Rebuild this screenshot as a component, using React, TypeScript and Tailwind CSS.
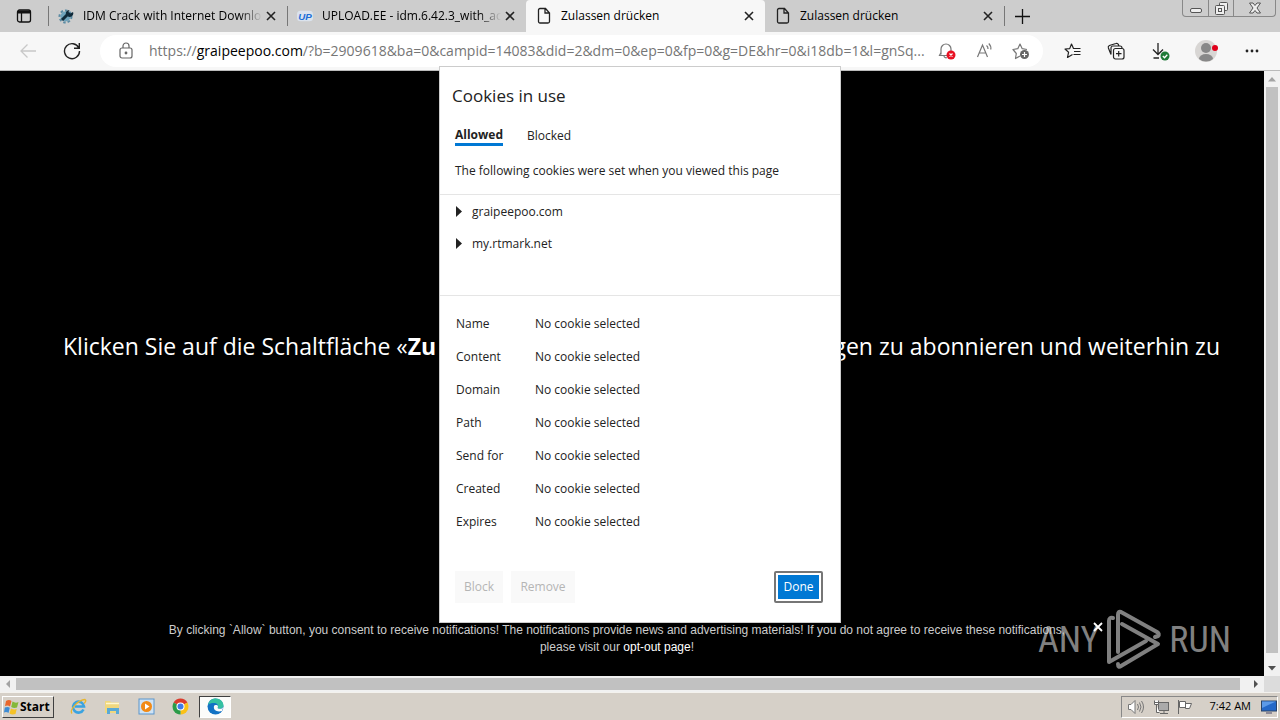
import type { ReactNode } from 'react'

const cookieFields = ['Name', 'Content', 'Domain', 'Path', 'Send for', 'Created', 'Expires']
const cookieHosts = ['graipeepoo.com', 'my.rtmark.net']

function CloseIcon() {
  return (
    <svg width="10" height="10" viewBox="0 0 10 10" stroke="#222" strokeWidth="1.6" fill="none">
      <path d="M1 1l8 8M9 1L1 9" />
    </svg>
  )
}

function PageIcon() {
  return (
    <svg width="16" height="18" viewBox="0 0 16 18" stroke="#222" strokeWidth="1.3" fill="none">
      <path d="M2.5 3A1.5 1.5 0 0 1 4 1.5h5.5l4 4.5v8.5a1.5 1.5 0 0 1-1.5 1.5H4a1.5 1.5 0 0 1-1.5-1.5z M9 1.5V6h4.5" />
    </svg>
  )
}

function GearIcon() {
  return (
    <svg width="16" height="16" viewBox="0 0 16 16">
      <circle cx="7.5" cy="8.5" r="5" fill="#6fa3bb" />
      <circle cx="7.5" cy="8.5" r="6" fill="none" stroke="#5b8ba3" strokeWidth="2" strokeDasharray="2.5 2" />
      <path d="M4 12l5-5" stroke="#102a3a" strokeWidth="3" />
      <path d="M8.5 7.5a3.5 3.5 0 0 1 3-5.5l-1 2 2 1.5 2.5-1.5a3.5 3.5 0 0 1-5.5 4z" fill="#102a3a" />
    </svg>
  )
}

function UploadIcon() {
  return (
    <svg width="18" height="16" viewBox="0 0 18 16">
      <rect x="0" y="2" width="18" height="12" rx="4" fill="#dbe3ed" />
      <text x="9" y="12" textAnchor="middle" fontFamily="Liberation Sans" fontStyle="italic" fontWeight="bold" fontSize="11" fill="#1d6fd8">UP</text>
    </svg>
  )
}

function Tab({ icon, title, faded }: { icon: ReactNode; title: string; faded?: boolean }) {
  return (
    <>
      <span className="flex w-4 shrink-0 justify-center">{icon}</span>
      <span className={`ml-[9px] min-w-0 flex-1 overflow-hidden text-left whitespace-nowrap ${faded ? '[mask-image:linear-gradient(to_right,black_88%,transparent)]' : ''}`}>
        {title}
      </span>
      <button aria-label="Close tab" className="mr-[11px] ml-1 shrink-0">
        <CloseIcon />
      </button>
    </>
  )
}

function TabStrip() {
  return (
    <header className="flex h-8 shrink-0 bg-[#cdcdcd] text-xs text-black">
      <button aria-label="Tab actions" className="flex w-12 shrink-0 items-center justify-center">
        <svg width="16" height="16" viewBox="0 0 16 16" fill="none" stroke="#111" strokeWidth="1.3">
          <rect x="1.5" y="2" width="13" height="12" rx="2" />
          <path d="M5.5 5v9" />
          <path d="M2 4h12" strokeWidth="3" />
        </svg>
      </button>
      <div className="my-1.5 flex max-w-[239px] flex-1 items-center border-l border-[#777] pl-[9px]">
        <Tab icon={<GearIcon />} title="IDM Crack with Internet Downloa" faded />
      </div>
      <div className="my-1.5 flex max-w-[239px] flex-1 items-center border-l border-[#777] pl-[9px]">
        <Tab icon={<UploadIcon />} title="UPLOAD.EE - idm.6.42.3_with_act" faded />
      </div>
      <div className="flex max-w-[239px] flex-1 items-center rounded-t bg-[#f7f7f7] pl-[10px]">
        <Tab icon={<PageIcon />} title="Zulassen drücken" />
      </div>
      <div className="flex max-w-[239px] flex-1 items-center pl-[10px]">
        <Tab icon={<PageIcon />} title="Zulassen drücken" />
      </div>
      <button aria-label="New tab" className="my-1.5 flex w-9 items-center justify-center border-l border-[#777]">
        <svg width="15" height="15" viewBox="0 0 15 15" stroke="#111" strokeWidth="1.3">
          <path d="M7.5 0v15M0 7.5h15" />
        </svg>
      </button>
      <div className="mr-1 ml-auto flex h-[17px] shrink-0 divide-x divide-[#888] rounded-b-[4px] border border-t-0 border-[#888]">
        <button aria-label="Minimize" className="flex w-[26px] items-center justify-center">
          <svg width="12" height="12" viewBox="0 0 12 12" fill="#eee" stroke="#555">
            <rect x=".5" y="6.5" width="11" height="4" rx="1.5" />
          </svg>
        </button>
        <button aria-label="Restore" className="flex w-[25px] items-center justify-center">
          <svg width="13" height="13" viewBox="0 0 13 13" fill="#eee" stroke="#555">
            <rect x="4.5" y=".5" width="8" height="8" rx="1" />
            <rect x=".5" y="3.5" width="9" height="9" rx="1" />
            <rect x="3.5" y="6.5" width="3" height="3" />
          </svg>
        </button>
        <button aria-label="Close window" className="flex w-[41px] items-center justify-center">
          <svg width="12" height="12" viewBox="0 0 12 12" fill="#eee" stroke="#555">
            <path d="M.5 1H4l2 2.5L8 1h3.500L8 6l3.500 5H8L6 8.500 4 11H.5L4 6z" />
          </svg>
        </button>
      </div>
    </header>
  )
}

function Toolbar() {
  return (
    <div className="flex h-[39px] shrink-0 items-center border-b border-[#bbb] bg-[#f7f7f7] pl-[19px]">
      <button aria-label="Back" disabled>
        <svg width="18" height="16" viewBox="0 0 18 16" fill="none" stroke="#c8c8c8" strokeWidth="1.3">
          <path d="M17 8H2M8.5 1.5L2 8l6.5 6.5" />
        </svg>
      </button>
      <button aria-label="Refresh" className="ml-[26px]">
        <svg width="18" height="18" viewBox="0 0 18 18" fill="none" stroke="#222" strokeWidth="1.4">
          <path d="M15.8 6A7.5 7.5 0 1 0 16.5 9M16.3 1v5.300H11" />
        </svg>
      </button>
      <div className="ml-[19px] flex h-8 min-w-0 flex-1 items-center rounded-full bg-white pr-[13px] pl-[18px]">
        <svg className="shrink-0" width="16" height="18" viewBox="0 0 16 18" fill="none" stroke="#666" strokeWidth="1.2">
          <rect x="2" y="6" width="12" height="10" rx="2" />
          <path d="M5 6V4a3 3 0 0 1 6 0v2" />
          <circle cx="8" cy="11" r=".8" fill="#666" />
        </svg>
        <p className="ml-[15px] min-w-0 flex-1 overflow-hidden text-sm whitespace-nowrap text-[#767676]">
          https://<span className="text-black">graipeepoo.com</span>/?b=2909618&amp;ba=0&amp;campid=14083&amp;did=2&amp;dm=0&amp;ep=0&amp;fp=0&amp;g=DE&amp;hr=0&amp;i18db=1&amp;l=gnSq...
        </p>
        <div className="ml-2 flex shrink-0 items-center gap-[19px]">
          <button aria-label="Notifications blocked">
            <svg width="18" height="18" viewBox="0 0 18 18" fill="none" stroke="#777" strokeWidth="1.2">
              <path d="M3 12.5V7a5 5 0 0 1 10 0v3M3 10.5l-1.5 3H9M6 14a2 2 0 0 0 3 1.5" />
              <circle cx="13" cy="13" r="4.5" fill="#e81123" stroke="none" />
              <path d="M11.5 11.5l3 3M14.5 11.5l-3 3" stroke="#fff" />
            </svg>
          </button>
          <button aria-label="Read aloud">
            <svg width="18" height="18" viewBox="0 0 18 18" fill="none" stroke="#777" strokeWidth="1.2">
              <path d="M2.5 15L7.5 3l5 12M4.200 11h6.600M11.500 3.500a4 4 0 0 1 1.500 3.500M13.800 1.500a7 7 0 0 1 2 6" />
            </svg>
          </button>
          <button aria-label="Add to favorites">
            <svg width="18" height="18" viewBox="0 0 18 18" fill="none" stroke="#777" strokeWidth="1.2" strokeLinejoin="round">
              <path d="M8 14l-4.500 2.500.8-5L1 7.500l4.800-.8L8 2l2.200 4.700 4.800.8" />
              <circle cx="12.5" cy="12.5" r="4.5" fill="#666" stroke="none" />
              <path d="M12.5 10v5M10 12.500h5" stroke="#fff" />
            </svg>
          </button>
        </div>
      </div>
      <div className="ml-[21px] flex shrink-0 items-center gap-[25px] pr-5">
        <button aria-label="Favorites">
          <svg width="18" height="18" viewBox="0 0 18 18" fill="none" stroke="#222" strokeWidth="1.2" strokeLinejoin="round">
            <path d="M16.5 6.5h-7L7.5 2 5.700 6.600 1 7l3.600 3.200-1.100 5.300 5-3M10 9.500h6.500M9.500 12.500h7" />
          </svg>
        </button>
        <button aria-label="Collections">
          <svg width="18" height="18" viewBox="0 0 18 18" fill="none" stroke="#222" strokeWidth="1.2">
            <rect x="6.5" y="6.5" width="10.5" height="10.5" rx="2" />
            <path d="M11.700 9v5.500M9 11.700h5.500M4 12.500L1.400 6a2 2 0 0 1 1-2.500l6.500-2a2 2 0 0 1 2.500 1l.4 1.200M4 12.500V6a2 2 0 0 1 2-2h7a2 2 0 0 1 2 2" />
          </svg>
        </button>
        <button aria-label="Downloads">
          <svg width="20" height="20" viewBox="0 0 20 20" fill="none" stroke="#222" strokeWidth="1.3">
            <path d="M8 2v11M3 8.500l5 5 5-5M3.500 17H9" />
            <circle cx="15" cy="15" r="4.5" fill="#1f7a38" stroke="none" />
            <path d="M12.800 15l1.700 1.700 2.800-3" stroke="#fff" />
          </svg>
        </button>
        <button aria-label="Profile">
          <svg width="24" height="24" viewBox="0 0 24 24">
            <circle cx="11" cy="12" r="11" fill="#d8d6d4" />
            <circle cx="11" cy="9" r="5" fill="#888" />
            <path d="M4 20a7 5 0 0 1 14 0 11 11 0 0 1-14 0z" fill="#888" />
            <circle cx="20" cy="9" r="3" fill="#e0001b" />
          </svg>
        </button>
        <button aria-label="Settings and more">
          <svg width="16" height="4" viewBox="0 0 16 4" fill="#222">
            <circle cx="3" cy="2" r="1.4" />
            <circle cx="8" cy="2" r="1.4" />
            <circle cx="13" cy="2" r="1.4" />
          </svg>
        </button>
      </div>
    </div>
  )
}

function CookieDialog() {
  return (
    <section
      role="dialog"
      aria-label="Cookies in use"
      className="absolute -top-[5px] left-1/2 z-10 w-[402px] -translate-x-1/2 border border-[#ccc] bg-white text-xs text-[#222]"
    >
      <h1 className="pt-[17px] pl-3 text-[17px] leading-6">Cookies in use</h1>
      <div className="mt-[19px] flex items-start gap-6 pl-[15px] leading-4">
        <button className="border-b-[3px] border-[#0078d4] font-bold">Allowed</button>
        <button className="pt-px">Blocked</button>
      </div>
      <p className="mt-[17px] border-b border-[#e5e5e5] pb-[15px] pl-[15px] leading-4">
        The following cookies were set when you viewed this page
      </p>
      <ul className="h-[101px] border-b border-[#e5e5e5] pt-px leading-8">
        {cookieHosts.map(host => (
          <li key={host} className="flex items-center gap-[10px] pl-4">
            <svg width="6" height="12" viewBox="0 0 6 12" fill="#222">
              <path d="M0 0l6 5.500-6 5.500z" />
            </svg>
            {host}
          </li>
        ))}
      </ul>
      <table className="mt-[11px] ml-4 text-left">
        <tbody>
          {cookieFields.map(field => (
            <tr key={field} className="h-[33px]">
              <th scope="row" className="w-[79px] p-0 font-normal">{field}</th>
              <td className="p-0">No cookie selected</td>
            </tr>
          ))}
        </tbody>
      </table>
      <div className="mt-[33px] flex gap-2 pr-[17px] pb-[19px] pl-[15px]">
        <button disabled className="h-8 w-12 bg-[#f9f9f9] text-[#b5b5b5]">Block</button>
        <button disabled className="h-8 w-16 bg-[#f9f9f9] text-[#b5b5b5]">Remove</button>
        <button className="ml-auto h-8 w-[49px] rounded-xs border-2 border-[#767676] bg-[#0078d4] text-white ring-2 ring-white ring-inset">
          Done
        </button>
      </div>
    </section>
  )
}

function Watermark() {
  return (
    <div className="absolute right-[33px] bottom-1 flex items-center gap-[7px] font-['Liberation_Sans_Narrow','Roboto_Condensed',sans-serif] text-[36px] leading-none text-[#808080]">
      <span>ANY</span>
      <svg width="56" height="64" viewBox="0 0 56 64" fill="none" stroke="#808080" strokeWidth="4" strokeLinecap="round" strokeLinejoin="round">
        <path d="M12 44V7q0-4 3-3l36 20q3 2 1 4l-3 1" />
        <path d="M16 16l36 20L15 58q-3 2-3-2" />
        <path d="M7 10q-4-1-4 3v41L40 33" />
      </svg>
      <span>RUN</span>
    </div>
  )
}

function Arrow({ d, color = '#505050' }: { d: string; color?: string }) {
  return (
    <svg width="16" height="16" viewBox="0 0 16 16" fill={color} className="shrink-0">
      <path d={d} />
    </svg>
  )
}

function Taskbar() {
  return (
    <footer className="flex h-7 shrink-0 items-center border-t border-[#f4f2ee] bg-[#d6d0c8] px-0.5 text-black">
      <button className="flex h-[22px] w-[52px] items-center gap-px border border-t-white border-r-[#404040] border-b-[#404040] border-l-white px-px font-['Open_Sans','DejaVu_Sans',sans-serif] text-xs font-bold">
        <svg width="15" height="16" viewBox="0 0 15 16" className="shrink-0">
          <path d="M2 2q3-2 5.500 0L6 7.500Q4 6 1 7z" fill="#e8662c" />
          <path d="M8.500 2.500q3 2 6 .5L13 8.500q-3 1.200-5.800-.5z" fill="#84b83a" />
          <path d="M.8 8.500q3-1.200 5 .3L4.500 14Q2.500 12.500 0 13.500z" fill="#3d8bd4" />
          <path d="M7 9.500q3 1.500 5.700.5L11.500 15Q8 16 5.500 14.500z" fill="#f5c227" />
        </svg>
        Start
      </button>
      <div className="ml-4 flex items-center gap-[17px]">
        <button aria-label="Internet Explorer">
          <svg width="17" height="17" viewBox="0 0 17 17" fill="none">
            <path d="M13.500 11.500A5.500 5.500 0 1 1 14 8.500H5" stroke="#3aa3e0" strokeWidth="2.6" />
            <path d="M2 15.500C-1 12 8 2 15 1.500q2 1-1 4" stroke="#e8b62c" strokeWidth="1.3" />
          </svg>
        </button>
        <button aria-label="Explorer">
          <svg width="17" height="17" viewBox="0 0 17 17">
            <path d="M1 3h5l1 1.500h8V15H1z" fill="#f0d77e" />
            <path d="M2 5.500h13" stroke="#fff6cf" strokeWidth="1.5" />
            <path d="M3 16v-6h12v6h-3v-3H6v3z" fill="#5aa9d6" />
          </svg>
        </button>
        <button aria-label="Media Player">
          <svg width="17" height="17" viewBox="0 0 17 17">
            <rect x="1" y="1" width="15" height="15" fill="#cfe3f5" stroke="#5a95cc" />
            <circle cx="8.5" cy="8.5" r="5.5" fill="#f28a16" />
            <path d="M7 5.500l4.500 3L7 11.500z" fill="#fff" />
          </svg>
        </button>
        <button aria-label="Chrome">
          <svg width="17" height="17" viewBox="0 0 17 17">
            <path d="M8.500 8.500L1.600 4.500a8 8 0 0 1 13.800 0z" fill="#db3b2c" />
            <path d="M8.500 8.500l6.900-4a8 8 0 0 1-6.900 12z" fill="#fbc116" />
            <path d="M8.500 8.500v8A8 8 0 0 1 1.600 4.500z" fill="#2b9b48" />
            <circle cx="8.5" cy="8.5" r="4" fill="#fff" />
            <circle cx="8.5" cy="8.5" r="3" fill="#3f7be8" />
          </svg>
        </button>
      </div>
      <button aria-label="Edge" className="ml-2.5 flex h-[22px] w-8 items-center justify-center border border-t-[#404040] border-r-white border-b-white border-l-[#404040] bg-[#fcfcfa]">
        <svg width="17" height="17" viewBox="0 0 17 17">
          <circle cx="8.5" cy="8.5" r="8" fill="#1372c4" />
          <path d="M1 7C2 2.500 5 .5 8.500.5c5 0 8 3.500 8 7 0 3-4 4-6 2.500 2-3-1-5-3.500-5S2 5.500 1 7z" fill="#35c1a1" />
          <path d="M7 8c-1 4 3 6.500 8 5l1.500-4.500c-1 2.500-4 3-6 1.500 1-1 .5-3-1-3S7.300 7.200 7 8z" fill="#fcfcfa" />
        </svg>
      </button>
      <div className="ml-auto flex h-[22px] items-center border border-t-[#888] border-r-white border-b-white border-l-[#888] pl-[5px] text-[11px]">
        <svg width="18" height="16" viewBox="0 0 18 16" fill="#fff" stroke="#777">
          <path d="M1.500 5.500H4l4-4v13l-4-4H1.500z" />
          <path d="M10.500 5q2 3 0 6M12.500 3.500q3 4.500 0 9M14.500 2q4 6 0 12" fill="none" />
        </svg>
        <svg width="17" height="16" viewBox="0 0 17 16" fill="#fff" stroke="#666" className="ml-2">
          <rect x="5.5" y="3.5" width="10" height="8" fill="#aaa" />
          <path d="M7 14.500h8M11 12v2M1.500 1.500v4h4v-4M1.500 3.500h4M3.500 6v7.500h3" />
        </svg>
        <svg width="17" height="16" viewBox="0 0 17 16" fill="#fff" stroke="#666" className="ml-[7px]">
          <path d="M1.500 1v14M2.500 2.500h6v6h-6zM8.500 4.500h6l-2 5h-4z" />
        </svg>
        <time className="ml-4">7:42 AM</time>
        <svg width="16" height="14" viewBox="0 0 16 14" className="ml-2.5">
          <rect x=".5" y="1" width="15" height="10" fill="#2468c8" stroke="#2a4468" />
          <path d="M1 1.500h14L1 8z" fill="#5c9ae8" />
          <path d="M5 13h6" stroke="#446" />
        </svg>
      </div>
    </footer>
  )
}

export default function App() {
  return (
    <div className="flex h-screen flex-col overflow-hidden font-['Open_Sans','Noto_Sans',sans-serif]">
      <TabStrip />
      <Toolbar />
      <main className="relative flex min-h-0 flex-1 bg-black text-white">
        <div className="relative flex min-w-0 flex-1 flex-col">
          <p className="flex flex-1 items-center justify-between pr-11 pl-[63px] text-[23px] whitespace-nowrap">
            <span>Klicken Sie auf die Schaltfläche «<b>Zu</b></span>
            <span>gen zu abonnieren und weiterhin zu</span>
          </p>
          <Watermark />
          <div className="relative flex h-[54px] items-start justify-center pl-2 font-['Liberation_Sans',Arial,sans-serif] text-xs leading-[17px] text-[#ccc]">
            <p className="text-center">
              By clicking `Allow` button, you consent to receive notifications! The notifications provide news and advertising materials! If you do not agree to receive these notifications,
              <br />
              please visit our <a href="#opt-out" className="text-white">opt-out page</a>!
            </p>
            <button aria-label="Dismiss" className="ml-7">
              <svg width="10" height="10" viewBox="0 0 10 10" stroke="#fff" strokeWidth="1.8">
                <path d="M1 1l8 8M9 1L1 9" />
              </svg>
            </button>
          </div>
        </div>
        <div className="flex w-4 shrink-0 flex-col bg-[#f1f1f1]">
          <Arrow d="M8 6l4 4.500H4z" color="#a3a3a3" />
          <div className="mx-0.5 flex-1 bg-[#c1c1c1]" />
          <div className="h-[7px]" />
          <Arrow d="M4 6h8l-4 4.500z" />
        </div>
        <CookieDialog />
      </main>
      <div className="flex h-4 shrink-0 bg-[#f1f1f1]">
        <Arrow d="M10 4v8L6 8z" color="#a3a3a3" />
        <div className="my-0.5 flex-1 bg-[#c1c1c1]" />
        <div className="w-2" />
        <Arrow d="M6 4v8l4-4z" />
        <div className="w-4 bg-[#dcdcdc]" />
      </div>
      <Taskbar />
    </div>
  )
}
